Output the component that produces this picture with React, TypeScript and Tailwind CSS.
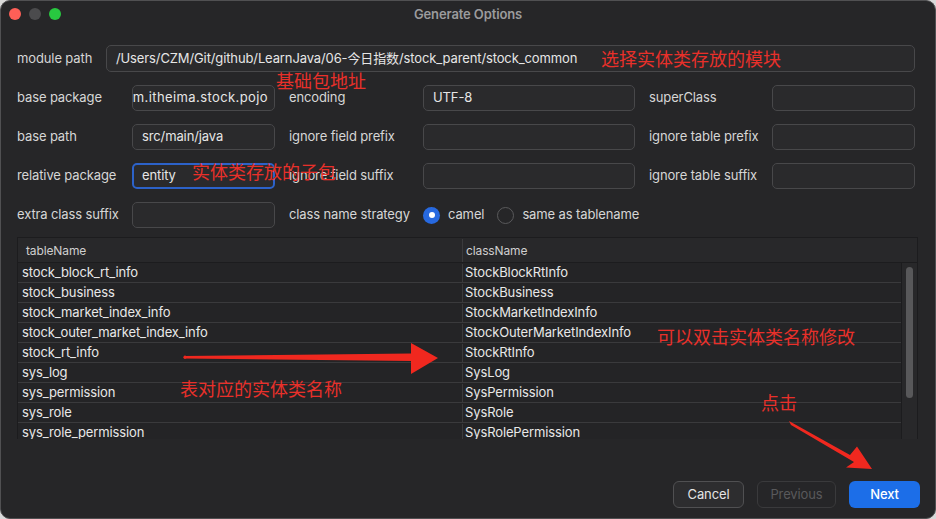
import React from 'react'

const rows: [string, string][] = [
  ['stock_block_rt_info', 'StockBlockRtInfo'],
  ['stock_business', 'StockBusiness'],
  ['stock_market_index_info', 'StockMarketIndexInfo'],
  ['stock_outer_market_index_info', 'StockOuterMarketIndexInfo'],
  ['stock_rt_info', 'StockRtInfo'],
  ['sys_log', 'SysLog'],
  ['sys_permission', 'SysPermission'],
  ['sys_role', 'SysRole'],
  ['sys_role_permission', 'SysRolePermission'],
]

function Field({ value = '', focus = false, end = false }: { value?: string; focus?: boolean; end?: boolean }) {
  return (
    <div
      className={
        'flex h-[26px] items-center overflow-hidden whitespace-nowrap rounded-[5px] bg-[#2a2a2c] text-[13px] text-[#e6e6e6] ' +
        (focus ? 'border-2 border-[#2c62c9] px-[8px]' : 'border border-[#48484a] px-[9px]') +
        (end ? ' justify-end pr-[6px] tracking-[0.4px]' : '')
      }
    >
      <span>{value}</span>
    </div>
  )
}

function Label({ text, pad = false }: { text: string; pad?: boolean }) {
  return <div className={'text-[13px] text-[#d6d6d6] whitespace-nowrap ' + (pad ? 'pl-[14px]' : '')}>{text}</div>
}

function Note({ text, className }: { text: string; className: string }) {
  return (
    <div
      className={'absolute whitespace-nowrap text-[18px] leading-none tracking-normal text-[#e8302a] ' + className}
      style={{ fontFamily: '"Noto Sans CJK SC", sans-serif' }}
    >
      {text}
    </div>
  )
}

export default function App() {
  return (
    <div className="w-[936px] h-[519px] bg-[#d9d9d9] tracking-[-0.12px]" style={{ fontFamily: 'Inter, "Noto Sans CJK SC", sans-serif' }}>
      <div className="relative flex h-full flex-col overflow-hidden rounded-[10px] border border-[#505052] bg-[#262628]">
        {/* title bar */}
        <div className="relative flex h-[28px] items-center justify-center">
          <div className="absolute left-[8px] top-[7px] flex gap-[8px]">
            <span className="h-[12px] w-[12px] rounded-full bg-[#fe5f57]" />
            <span className="h-[12px] w-[12px] rounded-full bg-[#4b4b4d]" />
            <span className="h-[12px] w-[12px] rounded-full bg-[#28c840]" />
          </div>
          <span className="text-[13px] font-semibold text-[#9b9b9d]">Generate Options</span>
        </div>

        {/* form */}
        <div className="flex flex-col gap-[13px] pl-[16px] pr-[20px] pt-[16px]">
          <div className="flex items-center">
            <div className="w-[89px]"><Label text="module path" /></div>
            <div className="flex-1">
              <div className="flex h-[27px] items-center rounded-[5px] border border-[#48484a] bg-[#2a2a2c] px-[9px] text-[13px] text-[#e6e6e6]">
                /Users/CZM/Git/github/LearnJava/06-今日指数/stock_parent/stock_common
              </div>
            </div>
          </div>

          <div className="grid grid-cols-[115px_143px_148px_212px_137px_143px] items-center gap-y-[13px]">
            <Label text="base package" />
            <Field value="com.itheima.stock.pojo" end />
            <Label text="encoding" pad />
            <Field value="UTF-8" />
            <Label text="superClass" pad />
            <Field />

            <Label text="base path" />
            <Field value="src/main/java" />
            <Label text="ignore field prefix" pad />
            <Field />
            <Label text="ignore table prefix" pad />
            <Field />

            <Label text="relative package" />
            <Field value="entity" focus />
            <Label text="ignore field suffix" pad />
            <Field />
            <Label text="ignore table suffix" pad />
            <Field />

            <Label text="extra class suffix" />
            <Field />
            <Label text="class name strategy" pad />
            <div className="col-span-3 flex items-center text-[13px] text-[#d6d6d6]">
              <span className="flex h-[17px] w-[17px] items-center justify-center rounded-full bg-[#2769e0]">
                <span className="h-[6px] w-[6px] rounded-full bg-white" />
              </span>
              <span className="ml-[8px]">camel</span>
              <span className="ml-[13px] h-[17px] w-[17px] rounded-full border border-[#5a5a5c]" />
              <span className="ml-[8px]">same as tablename</span>
            </div>
          </div>
        </div>

        {/* table */}
        <div className="ml-[16px] mr-[17px] mt-[9px] flex h-[202px] flex-col border-x border-t border-[#1c1c1e]">
          <div className="flex h-[25px] shrink-0 items-center border-b border-[#1c1c1e] bg-[#28282a] pt-[1px] text-[12px] text-[#cfcfcf]">
            <div className="w-[444px] pl-[8px]">tableName</div>
            <div className="flex h-full items-center border-l border-[#3a3a3c] pl-[3px]">className</div>
          </div>
          <div className="flex min-h-0 flex-1">
            <div className="flex-1 overflow-hidden border-r border-[#1c1c1e]">
              {rows.map(([t, c]) => (
                <div key={t} className="flex h-[20px] items-center border-b border-[#3a3a3c] bg-[#242426] pt-[1px] text-[13px] text-[#e8e8e8]">
                  <div className="w-[444px] pl-[4px]">{t}</div>
                  <div className="flex h-full items-center border-l border-[#3a3a3c] pl-[2px]">{c}</div>
                </div>
              ))}
            </div>
            <div className="w-[15px] bg-[#28282a] px-[4px] pt-[4px]">
              <div className="h-[131px] rounded-full bg-[#58585a]" />
            </div>
          </div>
        </div>

        {/* buttons */}
        <div className="mt-auto flex justify-end gap-[13px] pb-[10px] pr-[15px]">
          <button className="h-[27px] w-[71px] rounded-[6px] border border-[#505052] bg-[#2d2d2f] text-[13px] text-[#e4e4e4]">Cancel</button>
          <button className="h-[27px] w-[79px] rounded-[6px] border border-[#3a3a3c] bg-[#262628] text-[13px] text-[#59595b]">Previous</button>
          <button className="h-[27px] w-[71px] rounded-[6px] bg-[#1c6ee8] text-[13px] font-medium text-white">Next</button>
        </div>

        {/* annotations */}
        <Note text="选择实体类存放的模块" className="left-[600px] top-[48px]" />
        <Note text="基础包地址" className="left-[275px] top-[70px]" />
        <Note text="实体类存放的子包" className="left-[191px] top-[161px]" />
        <Note text="可以双击实体类名称修改" className="left-[656px] top-[326px]" />
        <Note text="表对应的实体类名称" className="left-[179px] top-[378px]" />
        <Note text="点击" className="left-[760px] top-[392px]" />
        <svg className="pointer-events-none absolute left-0 top-0" width="936" height="519">
          <polygon points="183,355 410,352.5 410,342 437,357 410,373 410,360 183,357.5" fill="#f0281f" />
          <circle cx="184" cy="356.2" r="1.6" fill="#f0281f" />
          <polygon points="788,420 790,424 853,461 845,466.5 871,468 856,445.5 849,454" fill="#f0281f" />
        </svg>
      </div>
    </div>
  )
}
